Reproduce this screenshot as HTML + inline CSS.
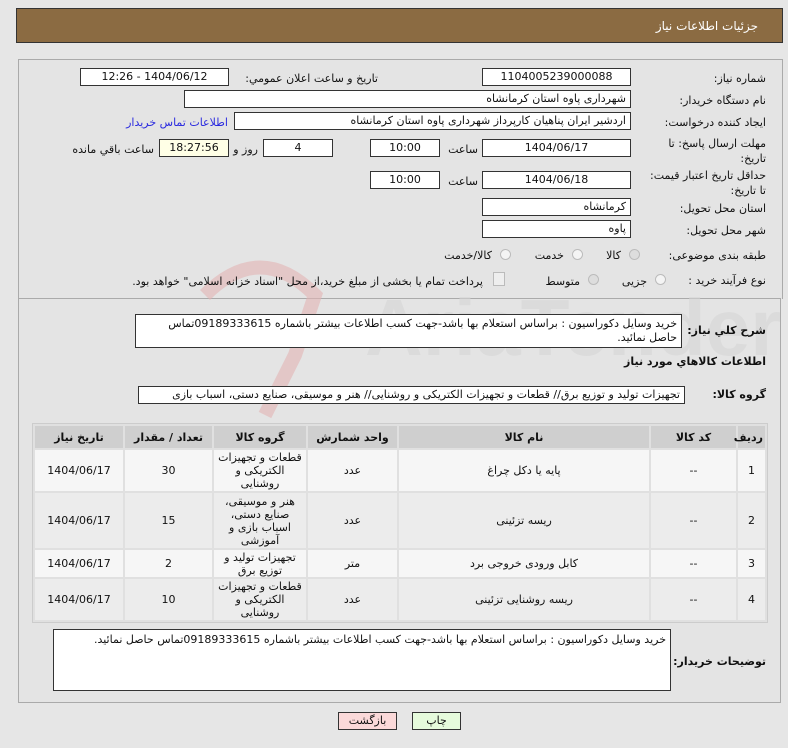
<!DOCTYPE html>
<html><head><meta charset="utf-8"><style>
body{margin:0;width:788px;height:748px;background:#e6e6e6;font-family:"DejaVu Sans","Liberation Sans",sans-serif;font-size:11px;color:#111;position:relative;overflow:hidden}
.a{position:absolute;white-space:nowrap}
.box{position:absolute;background:#fff;border:1px solid #333;box-sizing:border-box;direction:rtl;padding:0 4px;line-height:16px;white-space:nowrap;overflow:hidden}
.c{text-align:center}
.l{position:absolute;direction:rtl;text-align:right;white-space:nowrap}
.b{font-weight:bold;font-size:11px}
.rad{position:absolute;width:11px;height:11px;border-radius:50%;border:1px solid #bbb;background:#f4f4f4;box-sizing:border-box}
table{position:absolute;left:32px;top:423px;width:736px;border-collapse:separate;border-spacing:2px;background:#e0e0e0;border:1px solid #ccc;direction:rtl;table-layout:fixed}
td,th{text-align:center;font-size:11px;padding:0 2px;line-height:13px}
th{background:#cfcfcf;height:22px;font-weight:bold}
tr.o td{background:#f6f6f6}tr.e td{background:#ececec}
.btn{position:absolute;top:712px;height:18px;border:1px solid #333;box-sizing:border-box;text-align:center;line-height:16px}
</style></head><body>
<div class="a" style="left:16px;top:8px;width:767px;height:35px;background:#8b6b42;border:1px solid #333;box-sizing:border-box"></div>
<div class="l" style="right:30px;top:19px;color:#fff;font-size:12px">جزئیات اطلاعات نیاز</div>
<div class="a" style="left:18px;top:59px;width:763px;height:239px;border:1px solid #aaa;border-bottom:none;background:#e4e4e4"></div>
<div class="a" style="left:18px;top:298px;width:763px;height:405px;border:1px solid #aaa;background:#e4e4e4;box-sizing:border-box"></div>
<svg class="a" style="left:190px;top:245px" width="590" height="180"><g fill="none" stroke="#e2b4b4" stroke-width="14" opacity=".6"><path d="M15 50 Q70 -5 125 50 L105 110 L75 170"/></g><text x="175" y="110" font-size="80" font-family="Liberation Sans" font-weight="bold" fill="#d6d6d6" opacity=".6">AriaTender.net</text></svg>

<div class="l" style="right:22px;top:72px">شماره نیاز:</div>
<div class="box c" style="left:482px;top:68px;width:149px;height:18px">1104005239000088</div>
<div class="l" style="right:410px;top:72px">تاریخ و ساعت اعلان عمومي:</div>
<div class="box c" style="left:80px;top:68px;width:149px;height:18px">1404/06/12 - 12:26</div>

<div class="l" style="right:22px;top:94px">نام دستگاه خریدار:</div>
<div class="box" style="left:184px;top:90px;width:447px;height:18px">شهرداری پاوه استان کرمانشاه</div>

<div class="l" style="right:22px;top:116px">ایجاد کننده درخواست:</div>
<div class="box" style="left:234px;top:112px;width:397px;height:18px">اردشیر ایران پناهیان کارپرداز شهرداری پاوه استان کرمانشاه</div>
<div class="l" style="right:560px;top:116px;color:#2a2adf">اطلاعات تماس خریدار</div>

<div class="l" style="right:22px;top:136px;line-height:15px">مهلت ارسال پاسخ: تا<br>تاریخ:</div>
<div class="box c" style="left:482px;top:139px;width:149px;height:18px">1404/06/17</div>
<div class="l" style="right:310px;top:143px">ساعت</div>
<div class="box c" style="left:370px;top:139px;width:70px;height:18px">10:00</div>
<div class="box c" style="left:263px;top:139px;width:70px;height:18px">4</div>
<div class="l" style="right:530px;top:143px">روز و</div>
<div class="box c" style="left:159px;top:139px;width:70px;height:18px;background:#ffffe6">18:27:56</div>
<div class="l" style="right:634px;top:143px">ساعت باقي مانده</div>

<div class="l" style="right:22px;top:168px;line-height:15px">حداقل تاریخ اعتبار قیمت:<br>تا تاریخ:</div>
<div class="box c" style="left:482px;top:171px;width:149px;height:18px">1404/06/18</div>
<div class="l" style="right:310px;top:175px">ساعت</div>
<div class="box c" style="left:370px;top:171px;width:70px;height:18px">10:00</div>

<div class="l" style="right:22px;top:202px">استان محل تحویل:</div>
<div class="box" style="left:482px;top:198px;width:149px;height:18px">کرمانشاه</div>
<div class="l" style="right:22px;top:224px">شهر محل تحویل:</div>
<div class="box" style="left:482px;top:220px;width:149px;height:18px">پاوه</div>

<div class="l" style="right:22px;top:249px">طبقه بندی موضوعی:</div>
<div class="rad" style="left:629px;top:249px;background:#ddd"></div><div class="l" style="right:167px;top:249px">کالا</div>
<div class="rad" style="left:572px;top:249px"></div><div class="l" style="right:224px;top:249px">خدمت</div>
<div class="rad" style="left:500px;top:249px"></div><div class="l" style="right:296px;top:249px">کالا/خدمت</div>

<div class="l" style="right:22px;top:274px">نوع فرآیند خرید :</div>
<div class="rad" style="left:655px;top:274px"></div><div class="l" style="right:141px;top:275px">جزیی</div>
<div class="rad" style="left:588px;top:274px;background:#ddd"></div><div class="l" style="right:208px;top:275px">متوسط</div>
<div class="a" style="left:493px;top:272px;width:10px;height:12px;border:1px solid #bbb;background:#eee"></div>
<div class="l" style="right:305px;top:275px">پرداخت تمام یا بخشی از مبلغ خرید،از محل "اسناد خزانه اسلامی" خواهد بود.</div>

<div class="l b" style="right:22px;top:324px">شرح کلي نیاز:</div>
<div class="box" style="left:135px;top:314px;width:547px;height:34px;line-height:14px;white-space:normal;padding-top:2px">خرید وسایل دکوراسیون : براساس استعلام بها باشد-جهت کسب اطلاعات بیشتر باشماره 09189333615تماس حاصل نمائید.</div>
<div class="l b" style="right:22px;top:355px">اطلاعات کالاهاي مورد نیاز</div>
<div class="l b" style="right:22px;top:388px">گروه کالا:</div>
<div class="box" style="left:138px;top:386px;width:547px;height:18px">تجهیزات تولید و توزیع برق// قطعات و تجهیزات الکتریکی و روشنایی// هنر و موسیقی، صنایع دستی، اسباب بازی</div>

<table>
<colgroup><col style="width:27px"><col style="width:85px"><col style="width:250px"><col style="width:89px"><col style="width:92px"><col style="width:87px"><col></colgroup>
<tr><th>ردیف</th><th>کد کالا</th><th>نام کالا</th><th>واحد شمارش</th><th>گروه کالا</th><th>تعداد / مقدار</th><th>تاریخ نیاز</th></tr>
<tr class="o" style="height:41px"><td>1</td><td>--</td><td>پایه یا دکل چراغ</td><td>عدد</td><td>قطعات و تجهیزات الکتریکی و روشنایی</td><td>30</td><td>1404/06/17</td></tr>
<tr class="e" style="height:55px"><td>2</td><td>--</td><td>ریسه تزئینی</td><td>عدد</td><td>هنر و موسیقی، صنایع دستی، اسباب بازی و آموزشی</td><td>15</td><td>1404/06/17</td></tr>
<tr class="o" style="height:27px"><td>3</td><td>--</td><td>کابل ورودی خروجی برد</td><td>متر</td><td>تجهیزات تولید و توزیع برق</td><td>2</td><td>1404/06/17</td></tr>
<tr class="e" style="height:41px"><td>4</td><td>--</td><td>ریسه روشنایی تزئینی</td><td>عدد</td><td>قطعات و تجهیزات الکتریکی و روشنایی</td><td>10</td><td>1404/06/17</td></tr>
</table>

<div class="l b" style="right:22px;top:655px">توضیحات خریدار:</div>
<div class="box" style="left:53px;top:629px;width:618px;height:62px;line-height:14px;white-space:normal;padding-top:3px">خرید وسایل دکوراسیون : براساس استعلام بها باشد-جهت کسب اطلاعات بیشتر باشماره 09189333615تماس حاصل نمائید.</div>

<div class="btn" style="left:338px;width:59px;background:#fbd9d9">بازگشت</div>
<div class="btn" style="left:412px;width:49px;background:#e6fbdc">چاپ</div>
</body></html>
